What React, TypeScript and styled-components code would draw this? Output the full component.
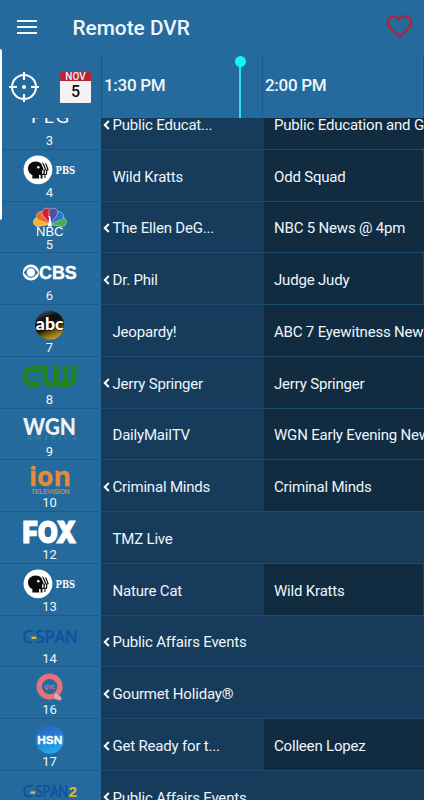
import React from "react";
import styled, { createGlobalStyle } from "styled-components";
import { MdFavoriteBorder } from "react-icons/md";

const sans = `"Liberation Sans", Arial, sans-serif`;

const PegLogo = () => (
  <LogoSvg viewBox="0 0 54 30">
    <text x="8" y="19.8" fontSize="18" fill="#fff" textLength="38" fontFamily="Lato, sans-serif">
      PEG
    </text>
  </LogoSvg>
);

const PbsLogo = () => (
  <LogoSvg viewBox="0 0 54 30">
    <circle cx="15" cy="14.8" r="14.4" fill="#fff" />
    <path
      d="M12.5 6.5c3.3 0 6 1.6 6.6 3.9l1.7 4.6-1.7.6.1 2.8c0 1-.7 1.5-1.7 1.5h-1.5l.2 3.7H9.3l.1-3.4C6.7 19.1 5 16.5 5 13.6 5 9.5 8.3 6.5 12.5 6.5z"
      fill="#0b0b0b"
    />
    <circle cx="15.3" cy="12.3" r="1.3" fill="#fff" />
    <path
      d="M18.5 6.9c1.8.7 2.9 2 3.3 3.6l1.6 4.5-1.6.7v2.9c0 1-.6 1.5-1.6 1.5h-.8l.2 3.3h-1.9l-.2-4.4h1.8c.8 0 1.2-.4 1.2-1.2v-2.8l1.5-.6-1.9-4.4c-.3-1.2-.8-2.2-1.6-3.1z"
      fill="#0b0b0b"
    />
    <path
      d="M21.7 7.6c1.5.8 2.2 1.8 2.5 3.1l1.5 4.3-1.5.7v2.9c0 1-.5 1.5-1.4 1.5h-.4l.1 2.8h-1.1v-3.9h.7c.6 0 .9-.4.9-1.1v-2.8l1.3-.6-1.5-4.2c-.2-1-.5-1.9-1.1-2.7z"
      fill="#0b0b0b"
    />
    <text
      x="32.6"
      y="19.2"
      fontSize="11.5"
      fontWeight="700"
      fill="#f2f8fc"
      textLength="19.6"
      lengthAdjust="spacingAndGlyphs"
      fontFamily='"DejaVu Serif", serif'
    >
      PBS
    </text>
  </LogoSvg>
);

const feathers = [
  { angle: -78, color: "#f5b52a" },
  { angle: 78, color: "#3fae49" },
  { angle: -47, color: "#ea6a25" },
  { angle: 47, color: "#2478c8" },
  { angle: -16, color: "#d01f3c" },
  { angle: 16, color: "#5d45a0" },
];

const NbcLogo = () => (
  <LogoSvg viewBox="0 0 54 30">
    {feathers.map((feather) => (
      <path
        key={feather.angle}
        d="M26.9 17.5L22.6 6.3C21.8 3 24 .8 26.9 .8S32 3 31.2 6.3z"
        fill={feather.color}
        stroke="#fff"
        strokeWidth=".4"
        transform={`rotate(${feather.angle} 26.9 17.5)`}
      />
    ))}
    <path d="M25 19.6l1.2-8.6-1.1-2 2.2.2 1.5 10.4z" fill="#fff" />
    <text
      x="13"
      y="29.4"
      fontSize="12.5"
      fill="#fff"
      textLength="27.5"
      lengthAdjust="spacingAndGlyphs"
      fontFamily={sans}
    >
      NBC
    </text>
  </LogoSvg>
);

const CbsLogo = () => (
  <LogoSvg viewBox="0 0 54 30">
    <circle cx="7.9" cy="14.5" r="8.1" fill="#fff" />
    <path
      d="M.8 14.5C4 10.3 5.8 9.2 7.9 9.2s3.9 1.1 7.1 5.3c-3.2 4.2-5 5.3-7.1 5.3S4 18.7.8 14.5z"
      fill="#256a9d"
    />
    <circle cx="7.9" cy="14.5" r="4.2" fill="#fff" />
    <text
      x="16"
      y="21"
      fontSize="18.5"
      fontWeight="700"
      fill="#fff"
      stroke="#fff"
      strokeWidth=".4"
      textLength="37.8"
      lengthAdjust="spacingAndGlyphs"
      fontFamily={sans}
    >
      CBS
    </text>
  </LogoSvg>
);

const AbcLogo = () => (
  <LogoSvg viewBox="0 0 54 30">
    <defs>
      <linearGradient id="abcBall" x1="0.2" y1="0" x2="0.6" y2="1">
        <stop offset="0" stopColor="#55585c" />
        <stop offset="0.3" stopColor="#0c0d10" />
        <stop offset="0.6" stopColor="#1c1606" />
        <stop offset="0.8" stopColor="#84630f" />
        <stop offset="1" stopColor="#d09a1a" />
      </linearGradient>
    </defs>
    <circle cx="26.7" cy="15.2" r="14.5" fill="url(#abcBall)" />
    <text
      x="12.8"
      y="19.6"
      fontSize="17"
      fontWeight="900"
      fill="#fff"
      stroke="#0c0c0c"
      strokeWidth="1.2"
      paintOrder="stroke"
      textLength="27.8"
      lengthAdjust="spacingAndGlyphs"
      fontFamily="Lato, sans-serif"
    >
      abc
    </text>
  </LogoSvg>
);

const CwLogo = () => (
  <LogoSvg viewBox="0 0 54 30">
    <g fill="none" stroke="#1f8420" strokeWidth="5.2">
      <path d="M18 6.5H9.500C4.5 6.500 2.200 9.500 2.200 14.500s2.300 8 7.300 8H17" />
      <path d="M22 3.800v11c0 5 2 7.700 6 7.700s5.700-2 5.700-6.200V3.800" />
      <path d="M33.700 16.300c0 4 1.800 6.200 5 6.200h5.800c4 0 6.400-2.200 6.400-6.200V3.800" />
      <path d="M42.500 3.800v18.500" />
      <path d="M7 14.500h8" strokeWidth="1.6" />
    </g>
  </LogoSvg>
);

const WgnLogo = () => (
  <LogoSvg viewBox="0 0 54 30">
    <text
      x="0"
      y="21"
      fontSize="23.5"
      fontWeight="900"
      fill="#edf2f5"
      textLength="53"
      lengthAdjust="spacingAndGlyphs"
      fontFamily="Lato, sans-serif"
    >
      WGN
    </text>
    <text x="4.5" y="26.2" fontSize="6" fill="#3d8fa8" textLength="49" fontFamily="Lato, sans-serif">
      AMERICA
    </text>
  </LogoSvg>
);

const IonLogo = () => (
  <LogoSvg viewBox="0 0 54 30">
    <text
      x="6"
      y="20.6"
      fontSize="27"
      fontWeight="700"
      fill="#e48b34"
      stroke="#e48b34"
      strokeWidth=".3"
      textLength="42"
      lengthAdjust="spacingAndGlyphs"
      fontFamily='"Open Sans", sans-serif'
    >
      ion
    </text>
    <text
      x="8"
      y="28.6"
      fontSize="6.8"
      fill="#cf9156"
      stroke="#cf9156"
      strokeWidth=".2"
      textLength="38.5"
      lengthAdjust="spacingAndGlyphs"
      fontFamily={sans}
    >
      TELEVISION
    </text>
  </LogoSvg>
);

const FoxLogo = () => (
  <LogoSvg viewBox="0 0 54 30">
    <text
      x="-.5"
      y="25.6"
      fontSize="30"
      fontWeight="900"
      fill="#fff"
      stroke="#fff"
      strokeWidth="1"
      textLength="54"
      lengthAdjust="spacingAndGlyphs"
      fontFamily="Inter, sans-serif"
    >
      FOX
    </text>
  </LogoSvg>
);

const CspanLogo = ({ second = false }) => {
  const baseline = second ? 20.6 : 21.5;

  return (
    <LogoSvg viewBox="0 0 54 30">
      <g
        fontSize={second ? 15.5 : 18}
        fill="#0f519f"
        stroke="#0f519f"
        strokeWidth=".6"
        fontFamily='"Open Sans", sans-serif'
      >
        <text x="-.5" y={baseline} textLength="10.5" lengthAdjust="spacingAndGlyphs">
          C
        </text>
        <text x="12.5" y={baseline} textLength={second ? 32.5 : 42} lengthAdjust="spacingAndGlyphs">
          SPAN
        </text>
      </g>
      <path d={second ? "M7.5 16.6h4.5" : "M8.5 16.8h4.8"} stroke="#d9b64a" strokeWidth="2.4" />
      {second && (
        <text
          x="45.4"
          y={baseline}
          fontSize="15.5"
          fontWeight="700"
          fill="#e3b33c"
          textLength="8.6"
          lengthAdjust="spacingAndGlyphs"
          fontFamily={sans}
        >
          2
        </text>
      )}
    </LogoSvg>
  );
};

const QvcLogo = () => (
  <LogoSvg viewBox="0 0 54 30">
    <circle cx="26.6" cy="14.6" r="10.4" fill="none" stroke="#e5717c" strokeWidth="5.4" />
    <path d="M30 21.5l3.5-1 5.5 5.5-1.5 3-6.5-2z" fill="#f2a0a0" stroke="#256a9d" strokeWidth=".5" />
    <text
      x="21.3"
      y="16.6"
      fontSize="5.5"
      fontWeight="700"
      fill="#e5717c"
      textLength="10.8"
      lengthAdjust="spacingAndGlyphs"
      fontFamily={sans}
    >
      QVC
    </text>
  </LogoSvg>
);

const HsnLogo = () => (
  <LogoSvg viewBox="0 0 54 30">
    <defs>
      <linearGradient id="hsnBall" x1="0.3" y1="0" x2="0.6" y2="1">
        <stop offset="0" stopColor="#2a63b8" />
        <stop offset="0.55" stopColor="#2385d6" />
        <stop offset="1" stopColor="#22b0ec" />
      </linearGradient>
    </defs>
    <circle cx="26.7" cy="15.2" r="14.4" fill="url(#hsnBall)" />
    <text
      x="14.2"
      y="19.5"
      fontSize="11.5"
      fontWeight="700"
      fill="#fff"
      stroke="#fff"
      strokeWidth=".3"
      textLength="25"
      lengthAdjust="spacingAndGlyphs"
      fontFamily={sans}
    >
      HSN
    </text>
  </LogoSvg>
);

const channels = [
  { number: 3, logo: <PegLogo />, now: "Public Educat...", started: true, next: "Public Education and Government" },
  { number: 4, logo: <PbsLogo />, now: "Wild Kratts", next: "Odd Squad", nextEnds: true },
  { number: 5, logo: <NbcLogo />, now: "The Ellen DeG...", started: true, next: "NBC 5 News @ 4pm" },
  { number: 6, logo: <CbsLogo />, now: "Dr. Phil", started: true, next: "Judge Judy", nextEnds: true },
  { number: 7, logo: <AbcLogo />, now: "Jeopardy!", next: "ABC 7 Eyewitness News" },
  { number: 8, logo: <CwLogo />, now: "Jerry Springer", started: true, next: "Jerry Springer" },
  { number: 9, logo: <WgnLogo />, now: "DailyMailTV", next: "WGN Early Evening News" },
  { number: 10, logo: <IonLogo />, now: "Criminal Minds", started: true, next: "Criminal Minds" },
  { number: 12, logo: <FoxLogo />, now: "TMZ Live" },
  { number: 13, logo: <PbsLogo />, now: "Nature Cat", next: "Wild Kratts", nextEnds: true },
  { number: 14, logo: <CspanLogo />, now: "Public Affairs Events", started: true },
  { number: 16, logo: <QvcLogo />, now: "Gourmet Holiday®", started: true },
  { number: 17, logo: <HsnLogo />, now: "Get Ready for t...", started: true, next: "Colleen Lopez" },
  { number: 18, logo: <CspanLogo second />, now: "Public Affairs Events", started: true },
];

const App = () => {
  return (
    <>
      <GlobalStyle />
      <Screen>
        <TopBar>
          <MenuIcon viewBox="0 0 20 14">
            <path d="M0 1h20M0 7h20M0 13h20" stroke="#eef8ff" strokeWidth="2" />
          </MenuIcon>
          <Title>Remote DVR</Title>
          <MdFavoriteBorder size={31} color="#a8293d" />
        </TopBar>

        <TimeBar>
          <Tools>
            <TargetIcon viewBox="0 0 30 30">
              <circle cx="15" cy="15" r="12" />
              <path d="M15 0v8M15 22v8M0 15h8M22 15h8" />
              <circle cx="15" cy="15" r="1" />
            </TargetIcon>
            <Calendar>
              <Month>NOV</Month>
              <Day>5</Day>
            </Calendar>
          </Tools>
          <TimeSlot $width={161}>1:30 PM</TimeSlot>
          <TimeSlot $width={161}>2:00 PM</TimeSlot>
          <TimeSlot $width={161} />
          <NowMarker />
        </TimeBar>

        <Guide>
          <Rows>
            {channels.map((channel) => (
              <Row key={channel.number}>
                <ChannelCell>
                  {channel.logo}
                  <ChannelNumber>{channel.number}</ChannelNumber>
                </ChannelCell>
                <Program $wide={!channel.next}>
                  {channel.started && (
                    <Chevron viewBox="0 0 7 10">
                      <path d="M5.8 1L1.8 5l4 4" fill="none" stroke="#fff" strokeWidth="2" />
                    </Chevron>
                  )}
                  {channel.now}
                </Program>
                {channel.next && <NextProgram $ends={channel.nextEnds}>{channel.next}</NextProgram>}
              </Row>
            ))}
          </Rows>
        </Guide>
        <EdgeHandle />
      </Screen>
    </>
  );
};

const GlobalStyle = createGlobalStyle`
  * {
    box-sizing: border-box;
  }

  body {
    margin: 0;
    overflow: hidden;
    font-family: Roboto, sans-serif;
  }
`;

const Screen = styled.div`
  position: relative;
  display: flex;
  flex-direction: column;
  width: 424px;
  height: 800px;
  overflow: hidden;
  background: #256a9d;
  color: #eef6fb;
`;

const TopBar = styled.header`
  display: flex;
  align-items: center;
  flex-shrink: 0;
  height: 56px;
  padding: 0 9px 3px 17px;
`;

const MenuIcon = styled.svg`
  width: 20px;
  height: 14px;
`;

const Title = styled.h1`
  flex: 1;
  margin: 2px 0 0 35.5px;
  font-size: 20.8px;
  font-weight: 500;
`;

const TimeBar = styled.div`
  position: relative;
  display: flex;
  flex-shrink: 0;
  height: 62px;
`;

const Tools = styled.div`
  display: flex;
  align-items: center;
  flex-shrink: 0;
  width: 101px;
  padding-left: 9px;
`;

const TargetIcon = styled.svg`
  width: 30px;
  height: 30px;
  fill: none;
  stroke: #fff;
  stroke-width: 2;
`;

const Calendar = styled.div`
  width: 31px;
  height: 31px;
  margin-left: 21px;
  border-radius: 1px;
  overflow: hidden;
  background: #f3f3f5;
  text-align: center;
`;

const Month = styled.div`
  height: 9px;
  background: #b92338;
  font-size: 10px;
  font-weight: 500;
  line-height: 10px;
`;

const Day = styled.div`
  color: #111;
  font-size: 16px;
  font-weight: 500;
  line-height: 21px;
`;

const TimeSlot = styled.div<{ $width: number }>`
  flex-shrink: 0;
  width: ${({ $width }) => $width}px;
  padding: 18px 0 0 2px;
  border-left: 1px solid #1c588a;
  font-size: 17px;
  font-weight: 500;
  letter-spacing: -0.3px;
  line-height: 22px;
`;

const NowMarker = styled.div`
  position: absolute;
  top: 5px;
  left: 239px;
  width: 2px;
  height: 57px;
  background: #2fe3f3;

  &::before {
    content: "";
    position: absolute;
    top: -5px;
    left: -4.5px;
    width: 11px;
    height: 11px;
    border-radius: 50%;
    background: #0ff4fb;
  }
`;

const Guide = styled.div`
  flex: 1;
  min-height: 0;
  overflow: hidden;
`;

const Rows = styled.div`
  margin-top: -20px;
`;

const Row = styled.div`
  display: flex;
  height: 51.75px;
`;

const ChannelCell = styled.div`
  display: flex;
  flex-direction: column;
  align-items: center;
  flex-shrink: 0;
  width: 101px;
  padding: 5px 2px 0 0;
  border-bottom: 1px solid #1d5a8d;
`;

const LogoSvg = styled.svg`
  flex-shrink: 0;
  width: 54px;
  height: 30px;
  overflow: visible;
`;

const ChannelNumber = styled.span`
  font-size: 13px;
  line-height: 16px;
`;

const Program = styled.div<{ $wide?: boolean }>`
  position: relative;
  display: flex;
  align-items: center;
  flex-shrink: 0;
  width: ${({ $wide }) => ($wide ? "323px" : "162.5px")};
  padding: 3px 0 0 11.5px;
  border-bottom: 1px solid #1c4c70;
  background: #163b5b;
  font-size: 15px;
  letter-spacing: -0.19px;
  white-space: nowrap;
`;

const NextProgram = styled(Program)<{ $ends?: boolean }>`
  width: 160.5px;
  padding-left: 10.5px;
  overflow: hidden;
  border-right: ${({ $ends }) => ($ends ? "1px solid #1b4567" : "0")};
  background: #112b41;
`;

const Chevron = styled.svg`
  position: absolute;
  top: 21.5px;
  left: 2px;
  width: 7px;
  height: 10px;
`;

const EdgeHandle = styled.div`
  position: absolute;
  top: 49px;
  left: 0;
  width: 2px;
  height: 171px;
  border-radius: 0 2px 2px 0;
  background: #fff;
`;

export default App;
